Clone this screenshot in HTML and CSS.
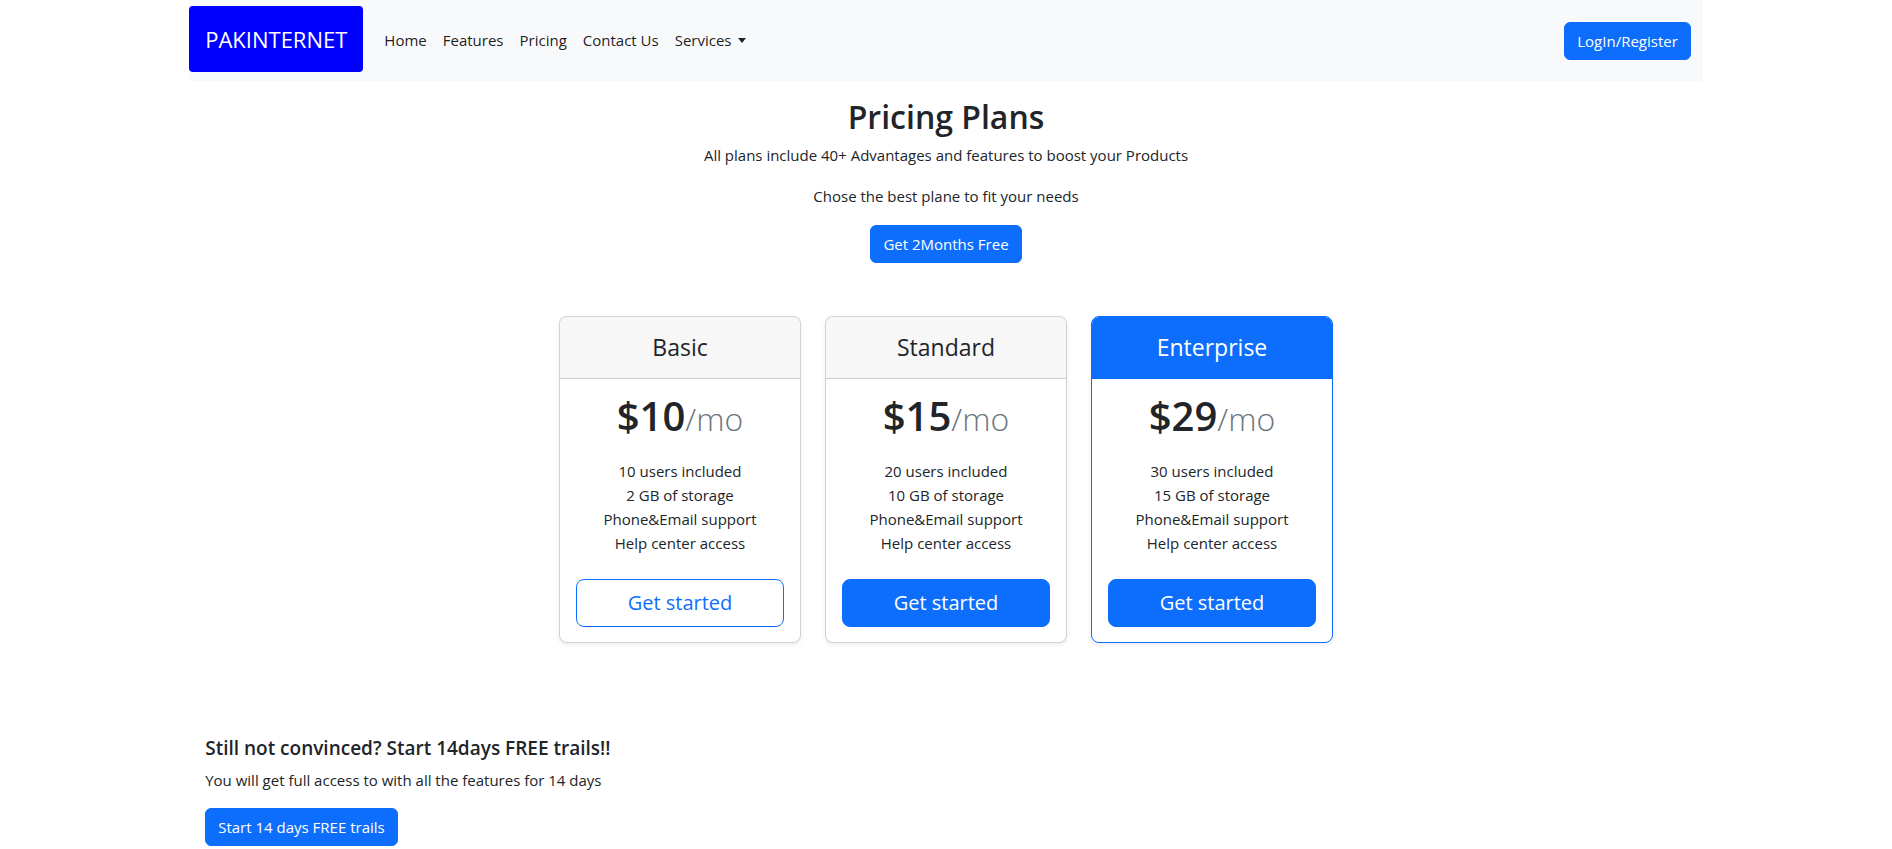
FILE: index.html
```html
<!DOCTYPE html>
<html lang="en">
<head>
<meta charset="utf-8">
<title>PAKINTERNET - Pricing</title>
<link rel="stylesheet" href="styles.css">
</head>
<body>
<nav class="navbar">
  <a class="brand" href="#">PAKINTERNET</a>
  <ul class="nav-links">
    <li><a href="#">Home</a></li>
    <li><a href="#">Features</a></li>
    <li><a href="#">Pricing</a></li>
    <li><a href="#">Contact Us</a></li>
    <li><a href="#" class="dropdown-toggle">Services</a></li>
  </ul>
  <button class="btn btn-primary login">LogIn/Register</button>
</nav>

<header class="pricing-header">
  <h2 class="title">Pricing Plans</h2>
  <p class="lead">All plans include 40+ Advantages and features to boost your Products</p>
  <p class="lead">Chose the best plane to fit your needs</p>
  <button class="btn btn-primary">Get 2Months Free</button>
</header>

<section class="plans">
  <div class="card">
    <div class="card-header"><h4>Basic</h4></div>
    <div class="card-body">
      <h1 class="price">$10<small>/mo</small></h1>
      <ul class="features">
        <li>10 users included</li>
        <li>2 GB of storage</li>
        <li>Phone&amp;Email support</li>
        <li>Help center access</li>
      </ul>
      <button class="btn btn-lg btn-outline">Get started</button>
    </div>
  </div>
  <div class="card">
    <div class="card-header"><h4>Standard</h4></div>
    <div class="card-body">
      <h1 class="price">$15<small>/mo</small></h1>
      <ul class="features">
        <li>20 users included</li>
        <li>10 GB of storage</li>
        <li>Phone&amp;Email support</li>
        <li>Help center access</li>
      </ul>
      <button class="btn btn-lg btn-primary">Get started</button>
    </div>
  </div>
  <div class="card card-featured">
    <div class="card-header"><h4>Enterprise</h4></div>
    <div class="card-body">
      <h1 class="price">$29<small>/mo</small></h1>
      <ul class="features">
        <li>30 users included</li>
        <li>15 GB of storage</li>
        <li>Phone&amp;Email support</li>
        <li>Help center access</li>
      </ul>
      <button class="btn btn-lg btn-primary">Get started</button>
    </div>
  </div>
</section>

<section class="trial">
  <h5>Still not convinced? Start 14days FREE trails!!</h5>
  <p>You will get full access to with all the features for 14 days</p>
  <button class="btn btn-primary">Start 14 days FREE trails</button>
</section>
</body>
</html>
```

FILE: styles.css
```css
* { box-sizing: border-box; }

body {
  margin: 0;
  font-family: "Open Sans", "Noto Sans", sans-serif;
  font-size: 16px;
  line-height: 1.5;
  color: #212529;
  background: #fff;
}

h1, h2, h4, h5, p, ul { margin: 0; }

.btn {
  display: inline-block;
  font-family: inherit;
  font-size: 16px;
  line-height: 24px;
  padding: 6px 12px;
  border: 1px solid transparent;
  border-radius: 6px;
  cursor: pointer;
}
.btn-primary { background: #0d6efd; border-color: #0d6efd; color: #fff; }
.btn-outline { background: #fff; border-color: #0d6efd; color: #0d6efd; }
.btn-lg { font-size: 20px; line-height: 30px; padding: 8px 16px; border-radius: 8px; width: 100%; }

/* Navbar */
.navbar {
  width: 80%;
  margin: 0 auto;
  height: 81px;
  background: #f8f9fa;
  display: flex;
  align-items: center;
  padding: 0 12px 0 0;
}
.brand {
  display: flex;
  align-items: center;
  height: 66px;
  margin-top: -3px;
  padding: 0 16px;
  background: #0000ff;
  color: #fff;
  border-radius: 4px;
  font-size: 22px;
  text-decoration: none;
  margin-right: 13px;
}
.nav-links {
  list-style: none;
  padding: 0;
  display: flex;
  flex: 1;
}
.nav-links a {
  display: block;
  padding: 8px;
  color: rgba(0,0,0,.9);
  text-decoration: none;
  font-size: 15px;
}
.dropdown-toggle::after {
  content: "";
  display: inline-block;
  margin-left: 7px;
  vertical-align: 3px;
  border-top: 5px solid #212529;
  border-left: 4px solid transparent;
  border-right: 4px solid transparent;
}
.login { font-size: 15px; }

/* Header */
.pricing-header {
  text-align: center;
  padding-top: 17px;
}
.title {
  font-size: 32px;
  font-weight: 600;
  line-height: 1.2;
  margin-bottom: 8px;
}
.lead { font-size: 15px; margin-bottom: 18px; }
.pricing-header .btn { font-size: 15px; }

/* Plans */
.plans {
  display: flex;
  justify-content: center;
  gap: 24px;
  margin-top: 53px;
}
.card {
  width: 242px;
  border: 1px solid rgba(0,0,0,.175);
  border-radius: 8px;
  box-shadow: 0 2px 4px rgba(0,0,0,.075);
  text-align: center;
  overflow: hidden;
  background: #fff;
}
.card-header {
  background: #f7f7f7;
  border-bottom: 1px solid rgba(0,0,0,.175);
  padding: 16px;
}
.card-header h4 {
  font-size: 23px;
  font-weight: 400;
  line-height: 29px;
}
.card-featured { border-color: #0d6efd; }
.card-featured .card-header {
  background: #0d6efd;
  border-color: #0d6efd;
  color: #fff;
}
.card-body { padding: 13px 16px 15px; }
.price {
  font-size: 40px;
  font-weight: 600;
  line-height: 48px;
}
.price small {
  font-size: 80%;
  font-weight: 300;
  color: #6c757d;
}
.features {
  list-style: none;
  padding: 0;
  margin: 16px 0 24px;
  font-size: 15px;
  line-height: 24px;
}

/* Trial */
.trial {
  width: 80%;
  margin: 93px auto 0;
  padding: 0 16px;
}
.trial h5 {
  font-size: 19px;
  font-weight: 600;
  line-height: 24px;
  margin-bottom: 9px;
}
.trial p { font-size: 15px; margin-bottom: 16px; }
.trial .btn { font-size: 15px; }
```
